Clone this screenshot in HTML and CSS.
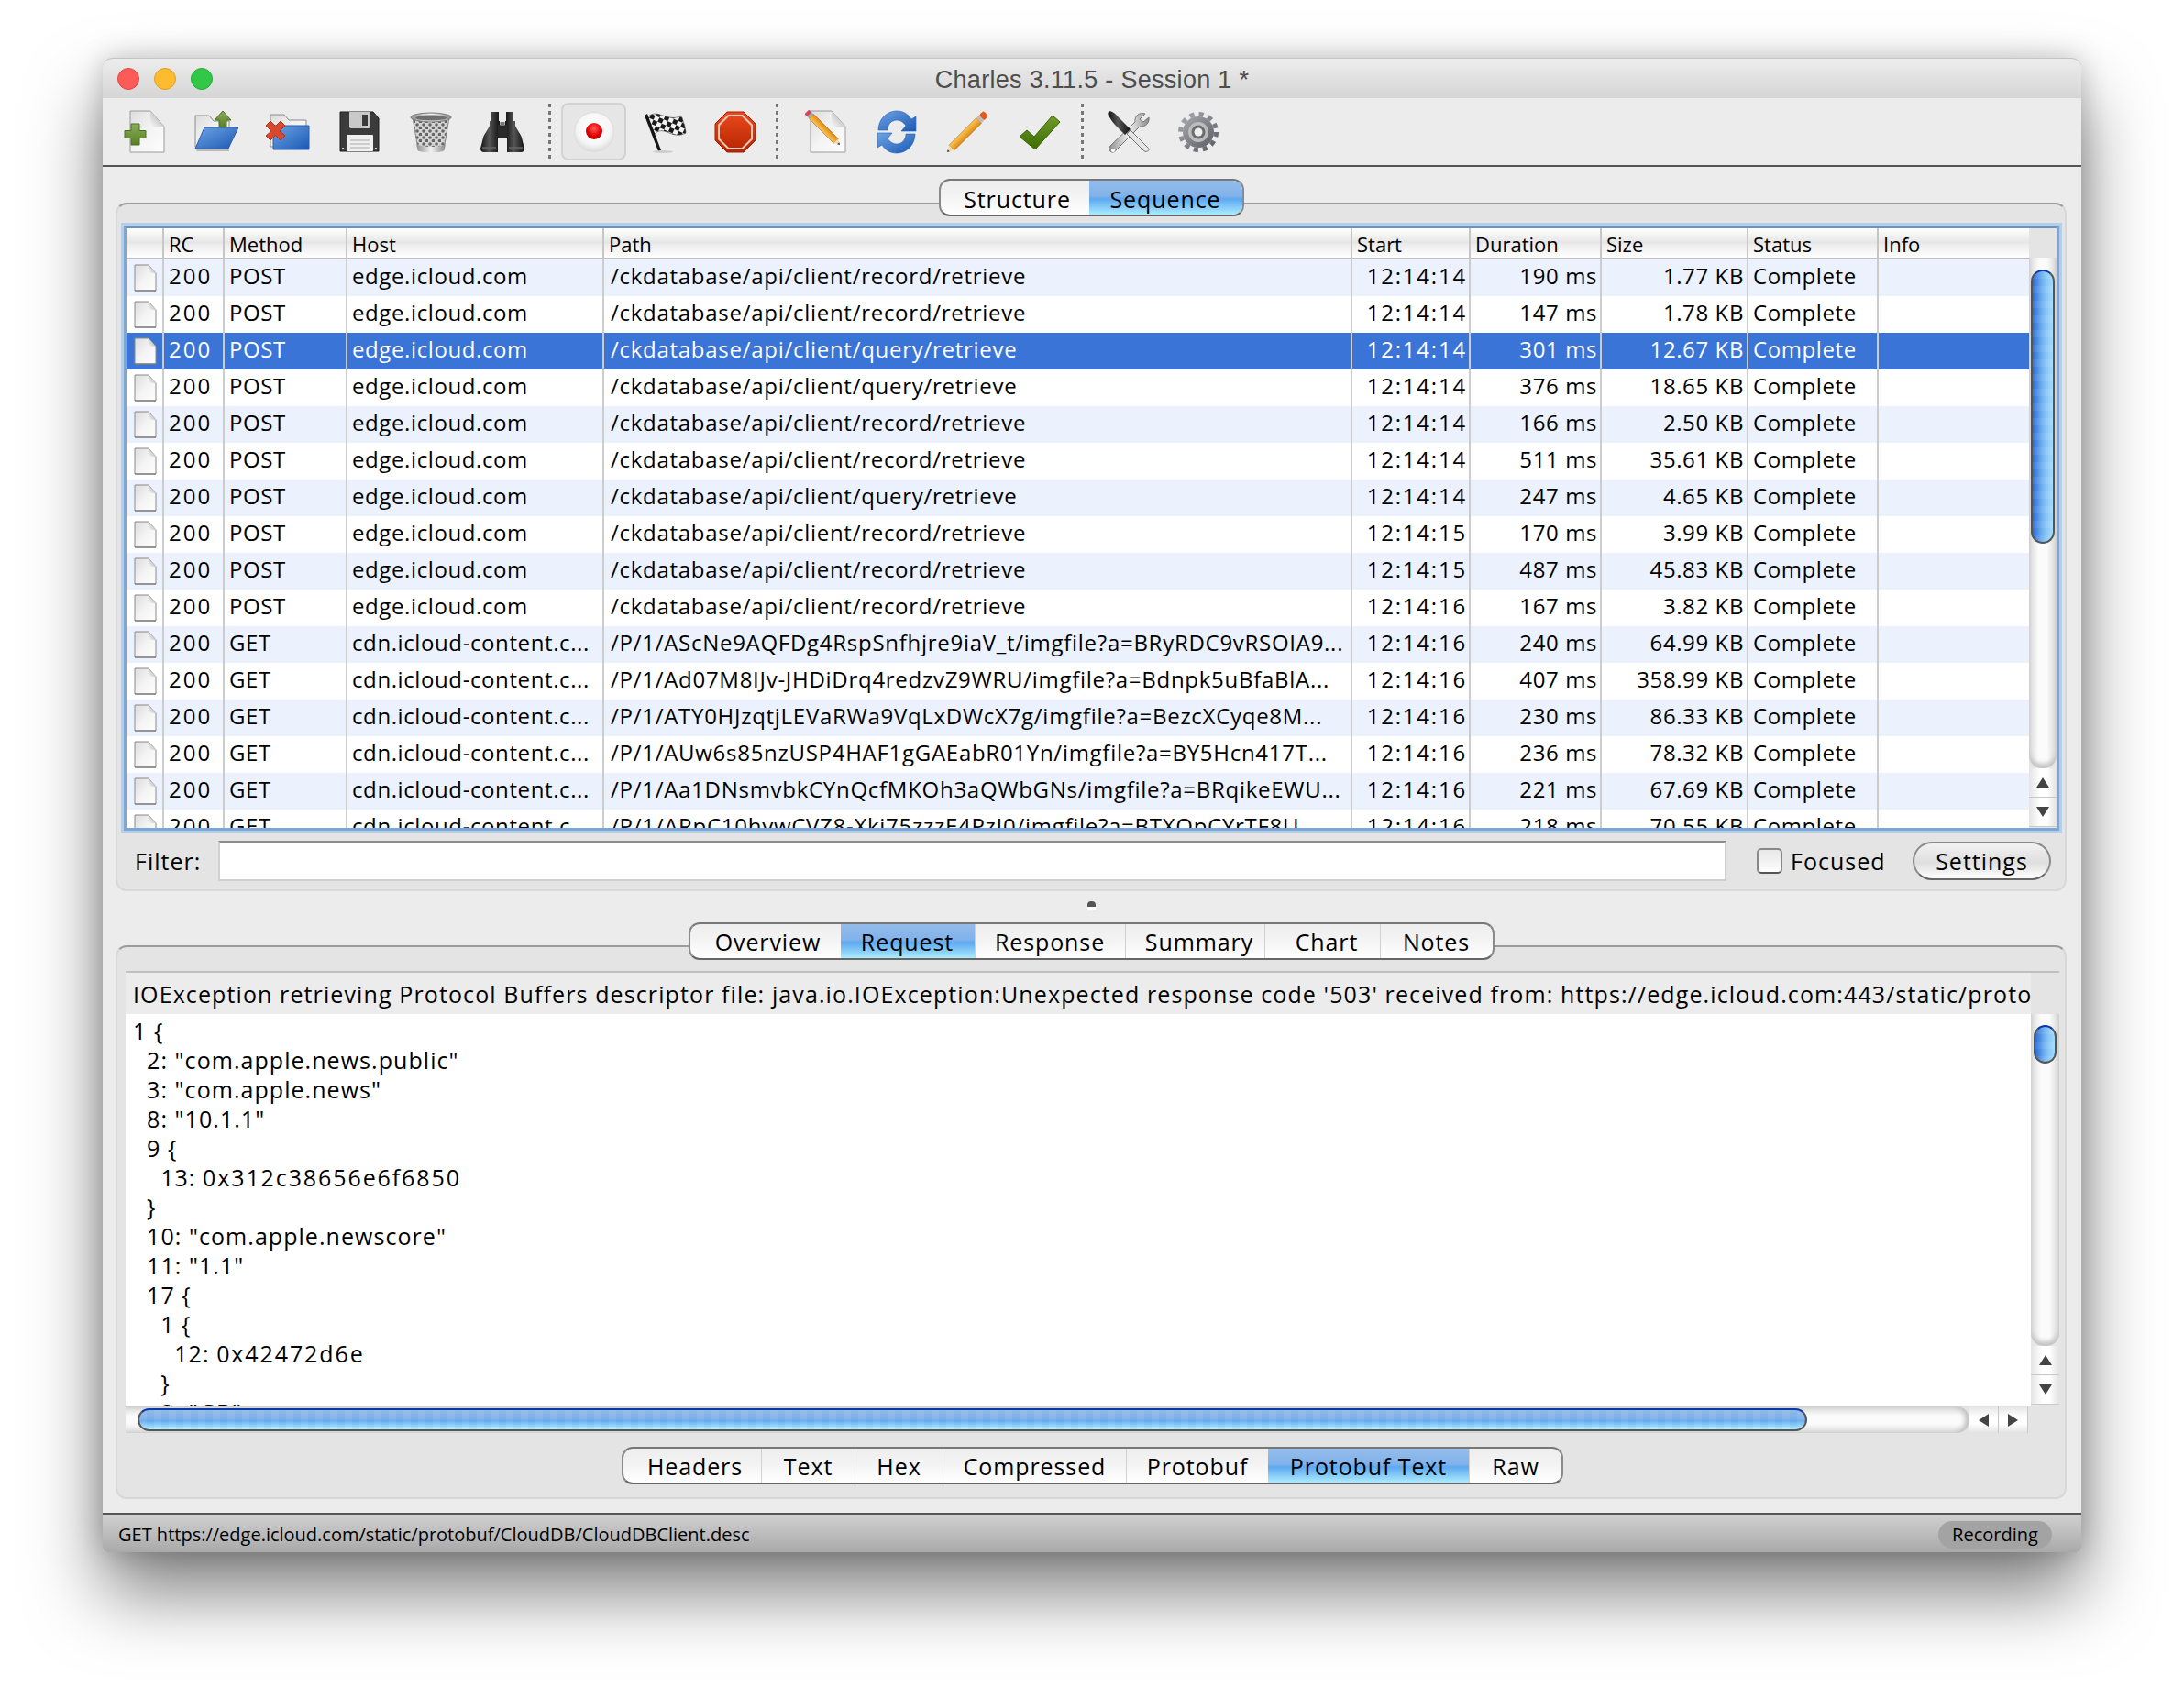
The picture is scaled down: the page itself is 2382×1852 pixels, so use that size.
FILE: index.html
```html
<!DOCTYPE html>
<html lang="en">
<head>
<meta charset="UTF-8">
<title>Charles 3.11.5 - Session 1 *</title>
<link rel="stylesheet" href="styles.css">
</head>
<body>

<svg class="defs" width="0" height="0">
  <defs>
    <linearGradient id="paper" x1="0" y1="0" x2="1" y2="1"><stop offset="0" stop-color="#dcdcdc"/><stop offset=".5" stop-color="#f4f4f4"/><stop offset="1" stop-color="#fdfdfd"/></linearGradient>
    <linearGradient id="fold" x1="0" y1="1" x2="1" y2="0"><stop offset="0" stop-color="#f8f8f8"/><stop offset="1" stop-color="#a4a4a4"/></linearGradient>
    <linearGradient id="green" x1="0" y1="0" x2="0" y2="1"><stop offset="0" stop-color="#8bad5a"/><stop offset="1" stop-color="#587f24"/></linearGradient>
    <linearGradient id="blue" x1="0" y1="0" x2="1" y2="1"><stop offset="0" stop-color="#6ea4e4"/><stop offset="1" stop-color="#1a58b4"/></linearGradient>
    <linearGradient id="red" x1="0" y1="0" x2="0" y2="1"><stop offset="0" stop-color="#ec4a1e"/><stop offset="1" stop-color="#b42400"/></linearGradient>
    <linearGradient id="steel" x1="0" y1="0" x2="1" y2="0"><stop offset="0" stop-color="#8e8e8e"/><stop offset=".5" stop-color="#f2f2f2"/><stop offset="1" stop-color="#8a8a8a"/></linearGradient>
    <linearGradient id="black" x1="0" y1="0" x2="1" y2="0"><stop offset="0" stop-color="#111"/><stop offset=".45" stop-color="#555"/><stop offset="1" stop-color="#111"/></linearGradient>
    <linearGradient id="orange" x1="0" y1="0" x2="0" y2="1"><stop offset="0" stop-color="#fbc65a"/><stop offset="1" stop-color="#e08a10"/></linearGradient>
    <linearGradient id="check" x1="0" y1="0" x2="0" y2="1"><stop offset="0" stop-color="#6f9c2c"/><stop offset="1" stop-color="#3f6c00"/></linearGradient>
    <radialGradient id="recball" cx=".5" cy=".35" r=".7"><stop offset="0" stop-color="#ff5a5a"/><stop offset=".6" stop-color="#e30000"/><stop offset="1" stop-color="#a00000"/></radialGradient>
    <radialGradient id="recface" cx=".5" cy=".4" r=".6"><stop offset="0" stop-color="#fff"/><stop offset=".7" stop-color="#f6f6f6"/><stop offset="1" stop-color="#dcdcdc"/></radialGradient>
    <linearGradient id="gearfill" x1="0" y1="0" x2="1" y2="1"><stop offset="0" stop-color="#a8a8b0"/><stop offset="1" stop-color="#5c5c64"/></linearGradient>
    <pattern id="mesh" width="7" height="7" patternUnits="userSpaceOnUse"><rect width="7" height="7" fill="#d4d4d4"/><circle cx="2" cy="2" r="1.800" fill="#666"/><circle cx="5.500" cy="5.500" r="1.800" fill="#666"/></pattern>
    <pattern id="checker" width="10" height="10" patternUnits="userSpaceOnUse" patternTransform="rotate(24)"><rect width="10" height="10" fill="#f2f2f2"/><rect width="5" height="5" fill="#1a1a1a"/><rect x="5" y="5" width="5" height="5" fill="#1a1a1a"/></pattern>
    <symbol id="doc" viewBox="0 0 25 30">
      <path d="M1 1H16L24 10V29H1Z" fill="url(#paper)" stroke="#8a8a8a" stroke-width="1"/>
      <path d="M16 1V10H24Z" fill="url(#fold)"/>
      <path d="M1 29H24" stroke="#777" stroke-width="1.200"/>
    </symbol>
  </defs>
</svg>

<div class="window">

  <div class="titlebar">
    <div class="lights">
      <span class="light light-close"></span>
      <span class="light light-min"></span>
      <span class="light light-max"></span>
    </div>
    <div class="title">Charles 3.11.5 - Session 1 *</div>
  </div>

  <div class="toolbar">
    <div class="tool">
      <svg width="48" height="48" viewBox="0 0 48 48">
        <path d="M8 1H30L45 18V46H8Z" fill="url(#paper)" stroke="#9a9a9a"/>
        <path d="M30 1V18H45Z" fill="url(#fold)"/>
        <path d="M9 15h9v7.500h7v8h-7V38H9v-7.500H2v-8h7Z" fill="url(#green)" stroke="#4c6e22"/>
      </svg>
    </div>
    <div class="tool">
      <svg width="48" height="48" viewBox="0 0 48 48">
        <path d="M1 6H16L21 12H38V40H1Z" fill="url(#paper)" stroke="#8c8c8c"/>
        <path d="M31 1L40 11H35V19H27V11H22Z" fill="url(#green)" stroke="#4c6e22"/>
        <path d="M11 19H48L37 42H1Z" fill="url(#blue)" stroke="#2a5ea8"/>
        <path d="M3 43H38V45H2Z" fill="#bbb"/>
      </svg>
    </div>
    <div class="tool">
      <svg width="48" height="48" viewBox="0 0 48 48">
        <path d="M5 5H20L25 11H44V40H5Z" fill="url(#paper)" stroke="#8c8c8c"/>
        <path d="M8 17H47V43H8Z" fill="url(#blue)" stroke="#2a5ea8"/>
        <path d="M5 12L10.500 17.500L16 12L21 17L15 23L21 28L16 33L10.500 27.500L5 33L0 28L6 23L0 17Z" fill="#d9482c" stroke="#b03218"/>
      </svg>
    </div>
    <div class="tool">
      <svg width="48" height="48" viewBox="0 0 48 48">
        <path d="M3 2H39L45 9V45H3Z" fill="#3b3b3b" stroke="#1c1c1c"/>
        <path d="M13 2H36V18C36 19 35 20 34 20H15C14 20 13 19 13 18Z" fill="#c9c9c9"/>
        <rect x="27" y="5" width="6" height="12" fill="#3a3a3a"/>
        <rect x="10" y="27" width="29" height="18" rx="1" fill="#f0f0f0"/>
        <path d="M14 33H35M14 37H35M14 41H35" stroke="#a8a8a8" stroke-width="1.200"/>
        <rect x="5" y="41" width="2" height="2" fill="#ccc"/>
        <rect x="41" y="41" width="2" height="2" fill="#ccc"/>
      </svg>
    </div>
    <div class="tool">
      <svg width="48" height="48" viewBox="0 0 48 48">
        <path d="M4 8L10 43C11 46 37 46 38 43L44 8Z" fill="url(#mesh)" stroke="#8a8a8a"/>
        <path d="M8 37C12 41 36 41 40 37L38.500 44C36 47 12 47 9.500 44Z" fill="url(#steel)"/>
        <ellipse cx="24" cy="8" rx="22" ry="5" fill="url(#steel)" stroke="#7a7a7a"/>
        <ellipse cx="24" cy="8.500" rx="17" ry="3" fill="#6e6e6e"/>
      </svg>
    </div>
    <div class="tool">
      <svg width="48" height="48" viewBox="0 0 48 48">
        <path d="M12 2H20V12H21V22H19V46H4C1 46 0 44 0 42L3 30C4 26 8 22 10 17V12H12Z" fill="url(#black)"/>
        <path d="M28 2H36V12H38V17C40 22 44 26 45 30L48 42C48 44 47 46 44 46H29V22H27V12H28Z" fill="url(#black)"/>
        <rect x="19" y="16" width="10" height="14" fill="#2a2a2a"/>
        <rect x="21.500" y="13" width="5" height="4" fill="#777"/>
        <path d="M2 41H17M31 41H46" stroke="#666" stroke-width="1.500"/>
      </svg>
    </div>
    <span class="tool-sep"></span>
    <div class="tool-record">
      <svg width="46" height="46" viewBox="0 0 46 46">
        <circle cx="23" cy="23" r="21.500" fill="url(#recface)" stroke="#ddd"/>
        <circle cx="23" cy="22" r="9" fill="url(#recball)"/>
      </svg>
    </div>
    <div class="tool tool-flag">
      <svg width="48" height="48" viewBox="0 0 48 48">
        <path d="M5 8C12 1 18 5 25 7C32 9 38 9 42 6C45 14 47 20 47 25C40 29 33 27 27 24C21 22 17 22 13 26Z" fill="url(#checker)" stroke="#444" stroke-width=".6"/>
        <path d="M2 6L5 4L20 44L17 45Z" fill="#141414"/>
        <ellipse cx="22" cy="45.500" rx="11" ry="1.500" fill="#ccc"/>
      </svg>
    </div>
    <div class="tool tool-stop">
      <svg width="48" height="48" viewBox="0 0 48 48">
        <path d="M15 2H33L46 15V33L33 46H15L2 33V15Z" fill="url(#red)" stroke="#a82000"/>
        <path d="M16.500 6H31.500L42 16.500V31.500L31.500 42H16.500L6 31.500V16.500Z" fill="none" stroke="#f6c8b8" stroke-width="2"/>
      </svg>
    </div>
    <span class="tool-sep tool-sep-mid"></span>
    <div class="tool tool-wide">
      <svg width="48" height="48" viewBox="0 0 48 48">
        <path d="M8 1H31L46 18V46H8Z" fill="url(#paper)" stroke="#9a9a9a"/>
        <path d="M31 1V18H46Z" fill="url(#fold)"/>
        <g transform="translate(40 38) rotate(-135)">
          <rect x="6" y="-3.500" width="38" height="7" fill="url(#orange)" stroke="#a86a10" stroke-width=".6"/>
          <path d="M6 -3.500V3.500L0 0Z" fill="#f4dcb0"/>
          <path d="M2.500 -1.500V1.500L0 0Z" fill="#333"/>
          <rect x="44" y="-3.500" width="3" height="7" fill="#aaa"/>
          <rect x="47" y="-3.500" width="4" height="7" rx="1.500" fill="#d4455a"/>
        </g>
      </svg>
    </div>
    <div class="tool tool-wide">
      <svg width="48" height="48" viewBox="0 0 48 48">
        <path d="M4 22C4 10 13 1 24 1C32 1 37 5 40 10L45 7V23H29L34 17C31 13 28 11 24 11C18 11 14 16 14 22Z" fill="url(#blue)" stroke="#2a62b8" stroke-width=".6"/>
        <path d="M44 26C44 38 35 47 24 47C16 47 11 43 8 38L3 41V25H19L14 31C17 35 20 37 24 37C30 37 34 32 34 26Z" fill="url(#blue)" stroke="#2a62b8" stroke-width=".6"/>
      </svg>
    </div>
    <div class="tool tool-wide">
      <svg width="48" height="48" viewBox="0 0 48 48">
        <g transform="translate(1 46) rotate(-45)">
          <rect x="7" y="-4" width="42" height="8" fill="url(#orange)" stroke="#a86a10" stroke-width=".6"/>
          <path d="M7 -4V4L0 0Z" fill="#f4dcb0"/>
          <path d="M2.500 -1.500V1.500L0 0Z" fill="#333"/>
          <rect x="49" y="-4" width="4" height="8" fill="#bdbdbd"/>
          <rect x="53" y="-4" width="7" height="8" rx="2" fill="#e85a20"/>
        </g>
      </svg>
    </div>
    <div class="tool tool-wide">
      <svg width="48" height="48" viewBox="0 0 48 48">
        <path d="M2 29L10 22L18 29L38 6L46 13L19 43Z" fill="url(#check)" stroke="#3a6400" stroke-linejoin="round"/>
      </svg>
    </div>
    <span class="tool-sep tool-sep-last"></span>
    <div class="tool tool-narrow">
      <svg width="48" height="48" viewBox="0 0 48 48">
        <path d="M42 4C36 2 30 6 31 13L4 39C2 41 2 44 4 45C6 47 9 46 10 44L36 18C42 19 47 14 46 8L40 13L36 10Z" fill="url(#steel)" stroke="#777"/>
        <path d="M7 42a2 2 0 1 0 .1 0Z" fill="#fff"/>
        <path d="M22 26L26 22L45 41C47 43 46 45 44 45C43 46 41 45 40 44Z" fill="#e4e4e4" stroke="#777"/>
        <path d="M2 6C0 3 3 0 6 2C9 3 12 7 15 10L26 21L20 27L9 16C6 13 4 9 2 6Z" fill="url(#black)"/>
      </svg>
    </div>
    <div class="tool tool-narrow">
      <svg width="48" height="48" viewBox="0 0 48 48">
        <circle cx="24" cy="24" r="19.500" fill="none" stroke="url(#gearfill)" stroke-width="5" stroke-dasharray="5.100 5.110"/>
        <circle cx="24" cy="24" r="17" fill="url(#gearfill)"/>
        <circle cx="24" cy="24" r="11" fill="#bcbcbc"/>
        <circle cx="24" cy="24" r="7.500" fill="#6c6c70"/>
        <circle cx="24" cy="24" r="4.500" fill="#eee"/>
      </svg>
    </div>
  </div>

  <div class="main">
    <div class="tabs tabs-view">
      <span class="tab">Structure</span>
      <span class="tab tab-on">Sequence</span>
    </div>

    <section class="panel panel-top">
      <div class="focus-frame">
        <div class="table-box">
          <table class="sessions">
            <colgroup>
              <col class="c-icon"><col class="c-rc"><col class="c-method"><col class="c-host"><col class="c-path">
              <col class="c-start"><col class="c-dur"><col class="c-size"><col class="c-status"><col class="c-info">
            </colgroup>
            <thead>
              <tr><th></th><th>RC</th><th>Method</th><th>Host</th><th>Path</th><th>Start</th><th>Duration</th><th>Size</th><th>Status</th><th>Info</th></tr>
            </thead>
            <tbody>
              <tr><td class="ic"><svg width="25" height="30"><use href="#doc"/></svg></td><td>200</td><td>POST</td><td>edge.icloud.com</td><td>/ckdatabase/api/client/record/retrieve</td><td class="num">12:14:14</td><td class="num">190 ms</td><td class="num">1.77 KB</td><td>Complete</td><td></td></tr>
              <tr><td class="ic"><svg width="25" height="30"><use href="#doc"/></svg></td><td>200</td><td>POST</td><td>edge.icloud.com</td><td>/ckdatabase/api/client/record/retrieve</td><td class="num">12:14:14</td><td class="num">147 ms</td><td class="num">1.78 KB</td><td>Complete</td><td></td></tr>
              <tr class="sel"><td class="ic"><svg width="25" height="30"><use href="#doc"/></svg></td><td>200</td><td>POST</td><td>edge.icloud.com</td><td>/ckdatabase/api/client/query/retrieve</td><td class="num">12:14:14</td><td class="num">301 ms</td><td class="num">12.67 KB</td><td>Complete</td><td></td></tr>
              <tr><td class="ic"><svg width="25" height="30"><use href="#doc"/></svg></td><td>200</td><td>POST</td><td>edge.icloud.com</td><td>/ckdatabase/api/client/query/retrieve</td><td class="num">12:14:14</td><td class="num">376 ms</td><td class="num">18.65 KB</td><td>Complete</td><td></td></tr>
              <tr><td class="ic"><svg width="25" height="30"><use href="#doc"/></svg></td><td>200</td><td>POST</td><td>edge.icloud.com</td><td>/ckdatabase/api/client/record/retrieve</td><td class="num">12:14:14</td><td class="num">166 ms</td><td class="num">2.50 KB</td><td>Complete</td><td></td></tr>
              <tr><td class="ic"><svg width="25" height="30"><use href="#doc"/></svg></td><td>200</td><td>POST</td><td>edge.icloud.com</td><td>/ckdatabase/api/client/record/retrieve</td><td class="num">12:14:14</td><td class="num">511 ms</td><td class="num">35.61 KB</td><td>Complete</td><td></td></tr>
              <tr><td class="ic"><svg width="25" height="30"><use href="#doc"/></svg></td><td>200</td><td>POST</td><td>edge.icloud.com</td><td>/ckdatabase/api/client/query/retrieve</td><td class="num">12:14:14</td><td class="num">247 ms</td><td class="num">4.65 KB</td><td>Complete</td><td></td></tr>
              <tr><td class="ic"><svg width="25" height="30"><use href="#doc"/></svg></td><td>200</td><td>POST</td><td>edge.icloud.com</td><td>/ckdatabase/api/client/record/retrieve</td><td class="num">12:14:15</td><td class="num">170 ms</td><td class="num">3.99 KB</td><td>Complete</td><td></td></tr>
              <tr><td class="ic"><svg width="25" height="30"><use href="#doc"/></svg></td><td>200</td><td>POST</td><td>edge.icloud.com</td><td>/ckdatabase/api/client/record/retrieve</td><td class="num">12:14:15</td><td class="num">487 ms</td><td class="num">45.83 KB</td><td>Complete</td><td></td></tr>
              <tr><td class="ic"><svg width="25" height="30"><use href="#doc"/></svg></td><td>200</td><td>POST</td><td>edge.icloud.com</td><td>/ckdatabase/api/client/record/retrieve</td><td class="num">12:14:16</td><td class="num">167 ms</td><td class="num">3.82 KB</td><td>Complete</td><td></td></tr>
              <tr><td class="ic"><svg width="25" height="30"><use href="#doc"/></svg></td><td>200</td><td>GET</td><td>cdn.icloud-content.c...</td><td>/P/1/AScNe9AQFDg4RspSnfhjre9iaV_t/imgfile?a=BRyRDC9vRSOIA9...</td><td class="num">12:14:16</td><td class="num">240 ms</td><td class="num">64.99 KB</td><td>Complete</td><td></td></tr>
              <tr><td class="ic"><svg width="25" height="30"><use href="#doc"/></svg></td><td>200</td><td>GET</td><td>cdn.icloud-content.c...</td><td>/P/1/Ad07M8IJv-JHDiDrq4redzvZ9WRU/imgfile?a=Bdnpk5uBfaBlA...</td><td class="num">12:14:16</td><td class="num">407 ms</td><td class="num">358.99 KB</td><td>Complete</td><td></td></tr>
              <tr><td class="ic"><svg width="25" height="30"><use href="#doc"/></svg></td><td>200</td><td>GET</td><td>cdn.icloud-content.c...</td><td>/P/1/ATY0HJzqtjLEVaRWa9VqLxDWcX7g/imgfile?a=BezcXCyqe8M...</td><td class="num">12:14:16</td><td class="num">230 ms</td><td class="num">86.33 KB</td><td>Complete</td><td></td></tr>
              <tr><td class="ic"><svg width="25" height="30"><use href="#doc"/></svg></td><td>200</td><td>GET</td><td>cdn.icloud-content.c...</td><td>/P/1/AUw6s85nzUSP4HAF1gGAEabR01Yn/imgfile?a=BY5Hcn417T...</td><td class="num">12:14:16</td><td class="num">236 ms</td><td class="num">78.32 KB</td><td>Complete</td><td></td></tr>
              <tr><td class="ic"><svg width="25" height="30"><use href="#doc"/></svg></td><td>200</td><td>GET</td><td>cdn.icloud-content.c...</td><td>/P/1/Aa1DNsmvbkCYnQcfMKOh3aQWbGNs/imgfile?a=BRqikeEWU...</td><td class="num">12:14:16</td><td class="num">221 ms</td><td class="num">67.69 KB</td><td>Complete</td><td></td></tr>
              <tr><td class="ic"><svg width="25" height="30"><use href="#doc"/></svg></td><td>200</td><td>GET</td><td>cdn.icloud-content.c...</td><td>/P/1/ARpC10hywCVZ8-Xki75zzzE4PzI0/imgfile?a=BTXOpCYrTF8U...</td><td class="num">12:14:16</td><td class="num">218 ms</td><td class="num">70.55 KB</td><td>Complete</td><td></td></tr>
            </tbody>
          </table>
        </div>
        <div class="vscroll">
          <div class="vscroll-head"></div>
          <div class="vtrack"><div class="vthumb vthumb-long"></div></div>
          <div class="vbtn"><span class="arrow-up"></span></div>
          <div class="vbtn"><span class="arrow-down"></span></div>
        </div>
      </div>

      <div class="filter-row">
        <label class="filter-label">Filter:</label>
        <div class="filter-input"></div>
        <span class="checkbox"></span>
        <span class="check-label">Focused</span>
        <span class="settings-btn">Settings</span>
      </div>
    </section>

    <div class="splitter"><span class="grip"></span></div>

    <div class="tabs tabs-detail">
      <span class="tab">Overview</span>
      <span class="tab tab-on">Request</span>
      <span class="tab">Response</span>
      <span class="tab">Summary</span>
      <span class="tab">Chart</span>
      <span class="tab">Notes</span>
    </div>

    <section class="panel panel-bottom">
      <div class="notice">IOException retrieving Protocol Buffers descriptor file: java.io.IOException:Unexpected response code '503' received from: https://edge.icloud.com:443/static/proto</div>
      <div class="viewer">
        <pre class="proto">1 {
  2: "com.apple.news.public"
  3: "com.apple.news"
  8: "10.1.1"
  9 {
    13: <span class="hex">0x312c38656e6f6850</span>
  }
  10: "com.apple.newscore"
  11: "1.1"
  17 {
    1 {
      12: <span class="hex">0x42472d6e</span>
    }
    2: "GB"</pre>
        <div class="vscroll vscroll-side">
          <div class="vtrack vtrack-short"><div class="vthumb vthumb-short"></div></div>
          <div class="vbtn"><span class="arrow-up"></span></div>
          <div class="vbtn"><span class="arrow-down"></span></div>
        </div>
      </div>
      <div class="hscroll">
        <div class="htrack"><div class="hthumb"></div></div>
        <div class="hbtn"><span class="arrow-left"></span></div>
        <div class="hbtn"><span class="arrow-right"></span></div>
        <div class="hcorner"></div>
      </div>
      <div class="tabs tabs-format">
        <span class="tab">Headers</span>
        <span class="tab">Text</span>
        <span class="tab">Hex</span>
        <span class="tab">Compressed</span>
        <span class="tab">Protobuf</span>
        <span class="tab tab-on">Protobuf Text</span>
        <span class="tab">Raw</span>
      </div>
    </section>
  </div>

  <div class="statusbar">
    <span class="status-text">GET https://edge.icloud.com/static/protobuf/CloudDB/CloudDBClient.desc</span>
    <span class="status-pill">Recording</span>
  </div>
</div>

</body>
</html>
```

FILE: styles.css
```css
* {
  box-sizing: border-box;
}
body {
  margin: 0;
  height: 1852px;
  background-color: #fff;
  font-family: "Open Sans", sans-serif;
  font-size: 24px;
  color: #000;
  overflow: hidden;
}
.defs {
  position: absolute;
}

/* window */
.window {
  width: 2158px;
  height: 1630px;
  margin: 63px 0 0 112px;
  display: flex;
  flex-direction: column;
  background-color: #ececec;
  border-radius: 11px 11px 5px 5px;
  box-shadow: 0 44px 80px rgba(0, 0, 0, 0.5), 0 0 30px rgba(0, 0, 0, 0.2);
}
.titlebar {
  height: 44px;
  display: flex;
  align-items: center;
  padding-top: 2px;
  background: linear-gradient(#ededed, #d5d5d5);
  border-top: 1px solid #c4c4c4;
  border-radius: 11px 11px 0 0;
}
.lights {
  display: flex;
  gap: 16px;
  padding-left: 16px;
}
.light {
  width: 24px;
  height: 24px;
  border-radius: 50%;
}
.light-close {
  background-color: #fc5b57;
  border: 1px solid #e2463f;
}
.light-min {
  background-color: #fdbb2f;
  border: 1px solid #e09e1e;
}
.light-max {
  background-color: #33c748;
  border: 1px solid #27aa35;
}
.title {
  flex: 1;
  margin-left: -120px;
  padding-top: 2px;
  text-align: center;
  font-family: "Liberation Sans", sans-serif;
  font-size: 27px;
  letter-spacing: 0.3px;
  color: #4d4d4d;
}

/* toolbar */
.toolbar {
  height: 76px;
  display: flex;
  align-items: center;
  padding-left: 7px;
  padding-top: 1px;
  background-color: #ececec;
  border-bottom: 2px solid #555;
}
.tool {
  width: 78px;
  display: flex;
  justify-content: center;
}
.tool-narrow {
  width: 76px;
}
.tool-flag {
  margin-left: 3px;
}
.tool-stop {
  width: 75px;
}
.tool-sep {
  width: 3px;
  height: 62px;
  margin: 0 11px;
  background-image: linear-gradient(#777 50%, transparent 50%);
  background-size: 3px 8px;
}
.tool-sep-mid {
  margin: 0 12px 0 7px;
}
.tool-sep-last {
  margin: 0 11px 0 6px;
}
.tool-record {
  width: 71px;
  height: 63px;
  display: flex;
  align-items: center;
  justify-content: center;
  background-color: #e6e6e6;
  border: 2px solid #d2d2d2;
  border-radius: 8px;
}

/* segmented tabs */
.tabs {
  display: grid;
  align-self: center;
  height: 41px;
  position: relative;
  z-index: 1;
  background: linear-gradient(#eeeeee, #f3f3f3 45%, #ffffff);
  border: 2px solid #8a8a8a;
  border-top-color: #777;
  border-bottom-color: #666;
  border-radius: 12px;
  overflow: hidden;
  font-size: 25px;
}
.tab {
  display: flex;
  align-items: center;
  justify-content: center;
  border-left: 1px solid #d0d0d0;
  white-space: nowrap;
  letter-spacing: 0.9px;
}
.tab:first-child {
  border-left: 0;
  padding-left: 6px;
}
.tab-on {
  background: linear-gradient(#95bcea, #80b2ea 46%, #5da8f0 54%, #aaecff);
  border-left: 0;
}
.tabs-view {
  margin-top: 13px;
  grid-template-columns: 162px 167px;
}
.tabs-view .tab {
  padding-top: 2px;
}
.tabs-view .tab-on {
  border-top: 2px solid #0a2a90;
  margin-top: -2px;
}
.tabs-detail {
  grid-template-columns: 164px 146px 164px 152px 126px 123px;
}
.tabs-detail .tab:nth-child(4),
.tabs-detail .tab:nth-child(5) {
  padding-left: 10px;
}
.tabs-format {
  margin-top: 15px;
  grid-template-columns: 150px 102px 96px 200px 155px 219px 101px;
}

/* main area */
.main {
  flex: 1;
  display: flex;
  flex-direction: column;
  padding: 0 16px 0 14px;
}
.panel {
  background-color: #e4e4e4;
  border: 2px solid #d8d8d8;
  border-top-color: #9c9c9c;
  border-radius: 12px;
}
.panel-top {
  height: 751px;
  margin-top: -15px;
  padding: 23px 6px 0 7px;
}
.focus-frame {
  display: flex;
  height: 660px;
  border: 3px solid #7aa7d8;
  border-top-color: #6f92b8;
  box-shadow: 0 0 0 3px #b4cee8;
  background-color: #fff;
}
.table-box {
  width: 2075px;
  overflow: hidden;
}
.sessions {
  width: 2075px;
  table-layout: fixed;
  border-collapse: separate;
  border-spacing: 0;
}
.c-icon { width: 41px; }
.c-rc { width: 66px; }
.c-method { width: 134px; }
.c-host { width: 280px; }
.c-path { width: 816px; }
.c-start { width: 129px; }
.c-dur { width: 143px; }
.c-size { width: 160px; }
.c-status { width: 142px; }
.c-info { width: 164px; }

.sessions th {
  height: 32px;
  padding: 2px 4px 0 5px;
  text-align: left;
  font-weight: normal;
  font-size: 22px;
  background: linear-gradient(#fff, #e6e6e6 48%, #ececec 55%, #fff);
  border-right: 2px solid #c6c6c6;
  border-bottom: 2px solid #bdbdbd;
  white-space: nowrap;
}
.sessions th:last-child {
  border-right: 0;
}
.sessions td {
  height: 40px;
  padding: 0 3px 5px 5px;
  border-right: 2px solid #cccccc;
  white-space: nowrap;
  overflow: hidden;
  letter-spacing: 0.6px;
}
.sessions td:last-child {
  border-right: 0;
}
.sessions td:nth-child(2) {
  letter-spacing: 2px;
}
.sessions td:nth-child(5) {
  padding-left: 7px;
  letter-spacing: 0.72px;
}
.sessions td:nth-child(6) {
  letter-spacing: 1.8px;
  padding-right: 2px;
}
.sessions td.num {
  text-align: right;
}
.sessions td.ic {
  padding: 0 0 0 8px;
  line-height: 0;
}
.sessions tbody tr:nth-child(odd) td {
  background-color: #ebf1fd;
}
.sessions tbody tr:nth-child(even) td {
  background-color: #fff;
}
.sessions tbody tr.sel td {
  background-color: #3a74d6;
  color: #fff;
}

/* scrollbars */
.vscroll {
  width: 30px;
  display: flex;
  flex-direction: column;
  background-color: #e6e6e6;
}
.vscroll-head {
  height: 32px;
  background-color: #e4e4e4;
}
.vtrack {
  height: 557px;
  padding: 13px 2px 0 2px;
  background: linear-gradient(90deg, #dcdcdc, #fbfbfb 35%, #fbfbfb 65%, #d8d8d8);
  border-radius: 0 0 14px 14px;
  box-shadow: inset 0 -5px 5px #c4c4c4;
}
.vthumb {
  border: 2px solid #555;
  border-top-color: #0a3aa8;
  border-radius: 13px;
  background:
    repeating-linear-gradient(rgba(255, 255, 255, 0.06) 0 8px, rgba(0, 0, 0, 0.01) 8px 16px),
    linear-gradient(90deg, #2a6cd8, #6fb0f0 45%, #8ccaf8 70%, #a4dcff);
}
.vthumb-long {
  height: 299px;
}
.vthumb-short {
  height: 42px;
}
.vbtn {
  height: 32px;
  display: flex;
  align-items: center;
  justify-content: center;
  background: linear-gradient(90deg, #e4e4e4, #fff 40%, #fff 65%, #e2e2e2);
  border-bottom: 1px solid #c8c8c8;
}
.arrow-up {
  border: 7px solid transparent;
  border-top: 0;
  border-bottom: 11px solid #444;
}
.arrow-down {
  border: 7px solid transparent;
  border-bottom: 0;
  border-top: 11px solid #444;
}
.arrow-left {
  border: 7px solid transparent;
  border-left: 0;
  border-right: 11px solid #444;
}
.arrow-right {
  border: 7px solid transparent;
  border-right: 0;
  border-left: 11px solid #444;
}

/* filter row */
.filter-row {
  height: 44px;
  margin-top: 11px;
  display: flex;
  align-items: center;
  padding-right: 9px;
  font-size: 25px;
}
.filter-label {
  width: 103px;
  padding-left: 12px;
  letter-spacing: 1px;
}
.filter-input {
  flex: 1;
  height: 44px;
  background-color: #fff;
  border: 2px solid #d0d0d0;
  border-top: 2px solid #8c8c8c;
}
.checkbox {
  width: 28px;
  height: 28px;
  margin-left: 33px;
  border: 2px solid #888;
  border-bottom-color: #555;
  border-radius: 5px;
  background: linear-gradient(#e8e8e8, #f2f2f2 50%, #fff);
}
.check-label {
  margin-left: 9px;
  width: 133px;
  letter-spacing: 1px;
}
.settings-btn {
  width: 151px;
  height: 42px;
  display: flex;
  align-items: center;
  justify-content: center;
  border: 2px solid #8a8a8a;
  border-bottom-color: #666;
  border-radius: 21px;
  background: linear-gradient(#f2f2f2, #dedede 55%, #fff);
  letter-spacing: 1px;
}

/* splitter */
.splitter {
  height: 34px;
  display: flex;
  justify-content: center;
  padding-top: 11px;
}
.grip {
  width: 9px;
  height: 10px;
  border-radius: 4px 4px 0 0;
  background: linear-gradient(#555 60%, #fff 60%);
}

/* request panel */
.panel-bottom {
  height: 604px;
  margin-top: -16px;
  padding: 26px 6px 14px 9px;
  display: flex;
  flex-direction: column;
}
.notice {
  height: 47px;
  padding: 0 31px 0 8px;
  line-height: 47px;
  white-space: nowrap;
  overflow: hidden;
  font-size: 25px;
  letter-spacing: 1.11px;
  background: linear-gradient(90deg, #ececec 2078px, #e4e4e4 2078px);
  border-top: 2px solid #c0c0c0;
}
.viewer {
  display: flex;
  height: 428px;
  background-color: #fff;
}
.proto {
  flex: 1;
  margin: 0;
  padding: 2px 0 0 8px;
  overflow: hidden;
  font-family: "Open Sans", sans-serif;
  font-size: 25px;
  line-height: 32px;
  letter-spacing: 1.05px;
}
.hex {
  letter-spacing: 1.9px;
}
.vscroll-side {
  width: 31px;
}
.vtrack-short {
  height: 362px;
  padding: 12px 3px 0 3px;
}
.hscroll {
  height: 29px;
  display: flex;
  background-color: #e4e4e4;
}
.htrack {
  width: 2011px;
  padding: 2px 0 2px 13px;
  background: linear-gradient(#d8d8d8, #fbfbfb 35%, #fbfbfb 65%, #dcdcdc);
  border-radius: 0 14px 14px 0;
  box-shadow: inset -5px 0 5px #c4c4c4;
}
.hthumb {
  width: 1821px;
  height: 100%;
  border: 2px solid #555;
  border-top-color: #0a3aa8;
  border-radius: 13px;
  background:
    repeating-linear-gradient(90deg, rgba(255, 255, 255, 0.06) 0 8px, rgba(0, 0, 0, 0.01) 8px 16px),
    linear-gradient(#93bbea, #7cb0ea 46%, #62aaf0 54%, #b4eeff);
}
.hbtn {
  width: 32px;
  display: flex;
  align-items: center;
  justify-content: center;
  background: linear-gradient(#e4e4e4, #fff 40%, #fff 65%, #e2e2e2);
  border-right: 1px solid #c8c8c8;
}
.hcorner {
  flex: 1;
}

/* status bar */
.statusbar {
  height: 43px;
  margin-top: 15px;
  display: flex;
  align-items: center;
  justify-content: space-between;
  padding: 2px 32px 0 17px;
  background: linear-gradient(#d0d0d0, #a9a9a9);
  border-top: 2px solid #555;
  border-radius: 0 0 5px 5px;
  font-size: 20px;
}
.status-pill {
  width: 124px;
  height: 30px;
  display: flex;
  align-items: center;
  justify-content: center;
  border-radius: 15px;
  background-color: #a3a3a3;
}
```
